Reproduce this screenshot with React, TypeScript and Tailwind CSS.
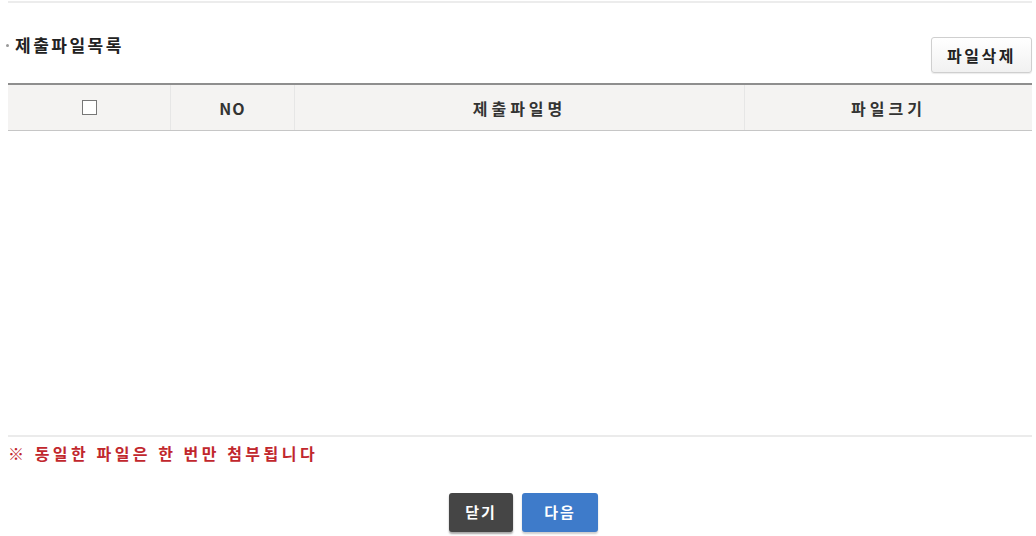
import React from "react";

export default function App() {
  const font = { fontFamily: '"Noto Sans CJK KR", "Noto Sans", sans-serif' };
  return (
    <div
      className="w-[1036px] h-[536px] bg-white flex flex-col pl-[8px] pr-[4px] text-[#333]"
      style={font}
    >
      <div className="mt-[1px] h-[2px] bg-[#ececec]" />
      <div className="mt-[34px] flex items-start justify-between h-[36px]">
        <div className="flex items-center gap-[6px] -ml-[2px] mt-[-2px]">
          <span className="w-[3px] h-[3px] bg-[#999] rounded-full" />
          <span className="text-[17px] font-bold tracking-[2.5px] text-[#222] leading-[20px]">
            제출파일목록
          </span>
        </div>
        <button className="w-[101px] h-[36px] border border-[#cfcfcf] rounded-[3px] bg-gradient-to-b from-white to-[#f1f1f1] text-[16px] font-bold tracking-[2.5px] text-[#222] shadow-[0_1px_1px_rgba(0,0,0,0.08)]">
          파일삭제
        </button>
      </div>
      <div className="mt-[10px] border-t-2 border-[#8e8e8e] border-b border-b-[#c6c6c6] bg-[#f4f3f2] h-[48px] grid grid-cols-[163px_124px_450px_1fr] text-[16px] font-bold tracking-[4px] text-[#333]">
        <div className="flex items-center justify-center border-r border-[#e6e6e6]">
          <span className="w-[15px] h-[15px] border border-[#777] bg-white" />
        </div>
        <div className="flex items-center justify-center border-r border-[#e6e6e6] tracking-[1px]">NO</div>
        <div className="flex items-center justify-center border-r border-[#e6e6e6]">제출파일명</div>
        <div className="flex items-center justify-center">파일크기</div>
      </div>
      <div className="h-[304px]" />
      <div className="h-[2px] bg-[#ebebeb]" />
      <div className="mt-[6px] text-[16px] font-bold text-[#c1272d] leading-[20px] tracking-[3.5px]">
        ※ 동일한 파일은 한 번만 첨부됩니다
      </div>
      <div className="mt-[30px] flex justify-center gap-[9px] pl-[7px]">
        <button className="w-[64px] h-[39px] rounded-[3px] bg-[#454545] text-white text-[15px] font-bold tracking-[2px] shadow-[0_2px_2px_rgba(0,0,0,0.35)]">
          닫기
        </button>
        <button className="w-[76px] h-[39px] rounded-[3px] bg-[#3e7bca] text-white text-[15px] font-bold tracking-[2px] shadow-[0_2px_2px_rgba(0,0,0,0.2)]">
          다음
        </button>
      </div>
    </div>
  );
}
